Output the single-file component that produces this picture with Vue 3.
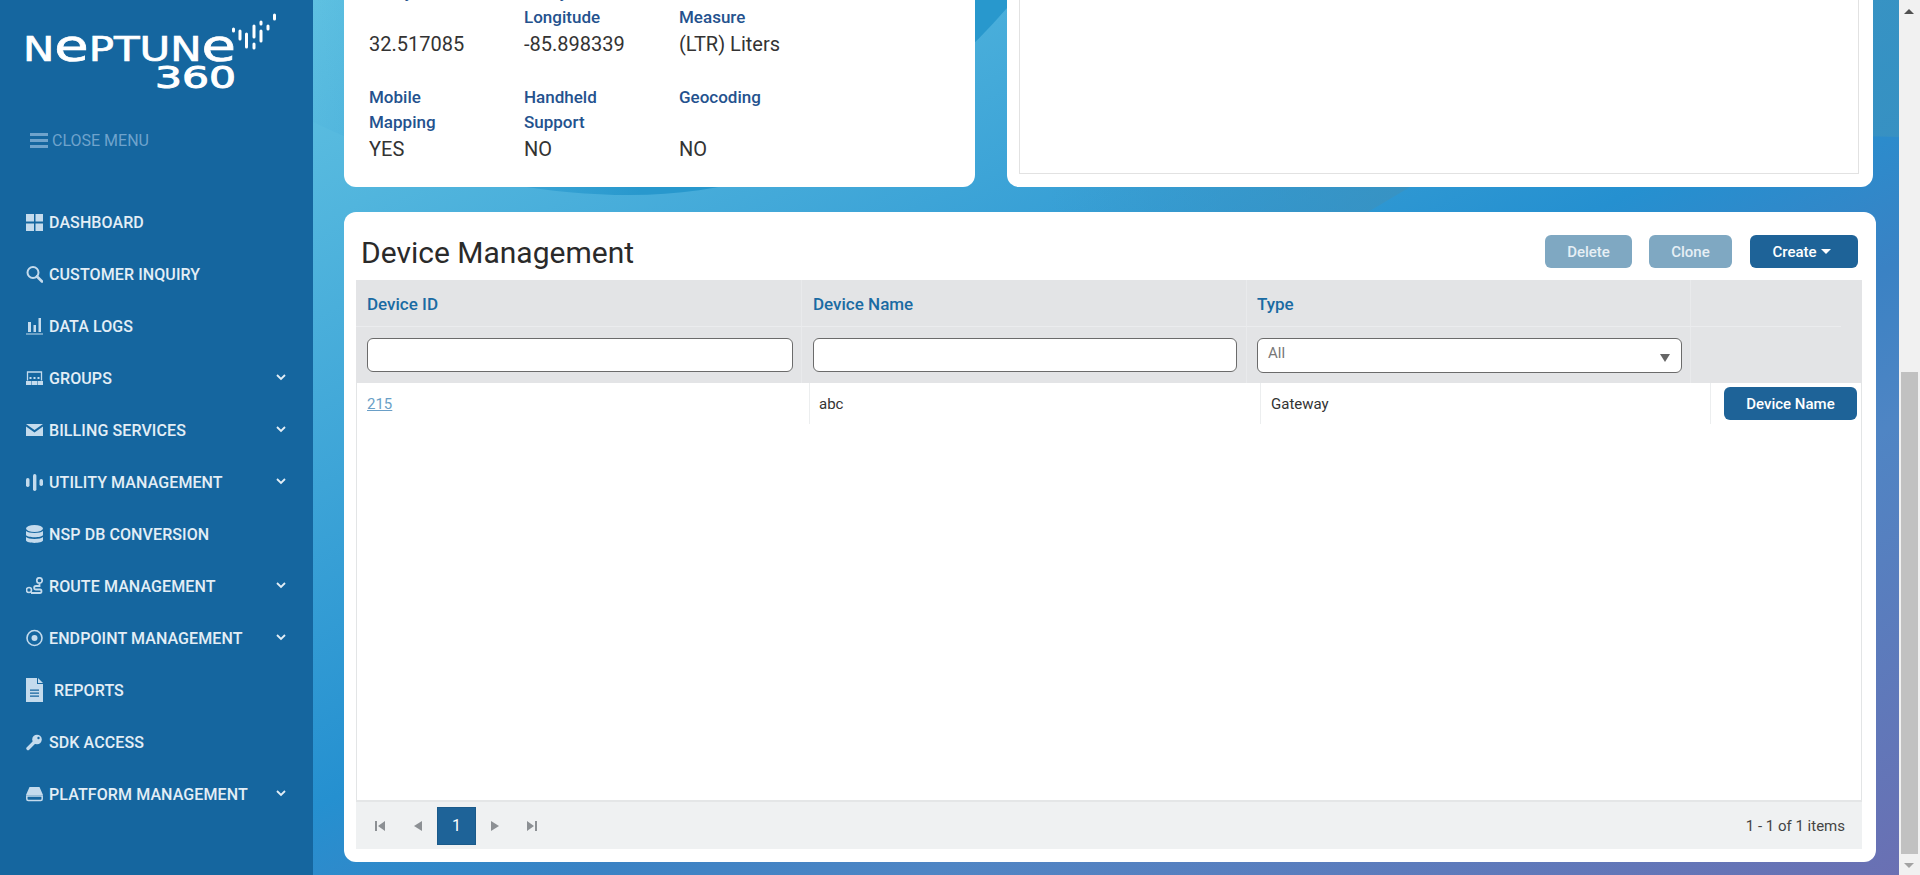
<template>
  <div class="app">
    <aside class="sidebar">
      <div class="logo">
        <svg width="300" height="96" viewBox="0 0 300 96">
          <text x="23" y="61" class="logo-word" textLength="213" lengthAdjust="spacingAndGlyphs">N<tspan class="logo-e">e</tspan>PTUN<tspan class="logo-e">e</tspan></text>
          <text x="155" y="88" class="logo-num" textLength="81" lengthAdjust="spacingAndGlyphs">360</text>
          <g stroke="#fff" stroke-width="3" stroke-linecap="round">
            <path d="M233.500 29v2M240 31v8M246.500 34v13M254 26v11M254 44v4M261 22v2M261 31v10M268 26v3M274.500 15v4" />
          </g>
        </svg>
      </div>
      <div class="close-menu">
        <svg width="18" height="15" viewBox="0 0 18 15"><path d="M0 0h18v3H0zM0 6h18v3H0zM0 12h18v3H0z" fill="#6fa3cc" /></svg>
        <span>CLOSE MENU</span>
      </div>
      <nav class="nav">
        <div v-for="item in navItems" :key="item.label" class="nav-item" :class="{ 'nav-reports': item.label === 'REPORTS' }">
          <svg class="nav-icon" :height="item.label === 'REPORTS' ? 24 : 18" :viewBox="item.label === 'REPORTS' ? '0 0 17 24' : '0 0 17 18'" v-html="item.icon"></svg>
          <span class="nav-label">{{ item.label }}</span>
          <svg v-if="item.sub" class="chevron" width="10" height="7" viewBox="0 0 10 7"><path d="M1 1l4 4 4-4" fill="none" stroke="#e3eef6" stroke-width="1.800" /></svg>
        </div>
      </nav>
    </aside>

    <main class="main">
      <svg class="bg-shapes" viewBox="313 0 1586 875" preserveAspectRatio="none">
        <defs>
          <linearGradient id="bowl" gradientUnits="userSpaceOnUse" x1="313" y1="0" x2="640" y2="0">
            <stop offset="0" stop-color="#3fa8d8" stop-opacity="0.1" />
            <stop offset="1" stop-color="#2898cd" stop-opacity="1" />
          </linearGradient>
          <linearGradient id="swoosh" gradientUnits="userSpaceOnUse" x1="1050" y1="0" x2="1400" y2="0">
            <stop offset="0" stop-color="#3a92c0" stop-opacity="0" />
            <stop offset="1" stop-color="#3a92c0" stop-opacity="0.8" />
          </linearGradient>
        </defs>
        <path d="M313 122C400 165 520 195 630 195C780 195 900 130 1007 8V0H313Z" fill="url(#bowl)" />
        <path d="M1050 212H1368L1410 187C1500 140 1700 130 1899 137V0H1050Z" fill="url(#swoosh)" />
      </svg>

      <div class="content">
        <section class="top-row">
          <div class="card info-card">
            <div v-for="field in fields" :key="field.label" class="field">
              <div class="field-label">{{ field.label }}</div>
              <div class="field-value">{{ field.value }}</div>
            </div>
          </div>
          <div class="card map-card">
            <div class="map-box"></div>
          </div>
        </section>

        <section class="card device-card">
          <div class="device-head">
            <h2>Device Management</h2>
            <div class="actions">
              <span class="btn btn-off">Delete</span>
              <span class="btn btn-off btn-clone">Clone</span>
              <span class="btn btn-create">Create <i class="caret"></i></span>
            </div>
          </div>

          <div class="grid">
            <div class="grid-head">
              <div class="th">Device ID</div>
              <div class="th">Device Name</div>
              <div class="th th-type">Type</div>
              <div class="th th-empty"></div>
              <div class="filter"><input type="text" class="input" /></div>
              <div class="filter filter-name"><input type="text" class="input" /></div>
              <div class="filter filter-type">
                <div class="select">
                  <span>All</span>
                  <i class="select-arrow"></i>
                </div>
              </div>
              <div class="filter"></div>
            </div>

            <div class="grid-body">
              <div class="row">
                <div class="td"><a class="link">215</a></div>
                <div class="td td-name">abc</div>
                <div class="td">Gateway</div>
                <div class="td td-action"><span class="btn btn-row">Device Name</span></div>
              </div>
            </div>

            <div class="pager">
              <div class="pager-nav">
                <svg width="12" height="12" viewBox="0 0 12 12"><path d="M1 1h2v10H1zM11 1v10L4 6z" fill="#8c9094" /></svg>
                <svg class="pg-prev" width="10" height="12" viewBox="0 0 10 12"><path d="M9 1v10L1 6z" fill="#8c9094" /></svg>
                <span class="page-current">1</span>
                <svg class="pg-next" width="10" height="12" viewBox="0 0 10 12"><path d="M1 1v10l8-5z" fill="#8c9094" /></svg>
                <svg class="pg-last" width="12" height="12" viewBox="0 0 12 12"><path d="M1 1v10l7-5zM9 1h2v10H9z" fill="#8c9094" /></svg>
              </div>
              <div class="pager-info">1 - 1 of 1 items</div>
            </div>
          </div>
        </section>
      </div>
    </main>

    <div class="scrollbar">
      <i class="sb-up"></i>
      <div class="sb-thumb"></div>
      <i class="sb-down"></i>
    </div>
  </div>
</template>

<script setup>
const c = '#c4dbed'

const navItems = [
  { label: 'DASHBOARD', icon: `<path fill="${c}" d="M0 1h8v7.500H0zM9.500 1H17v7.500H9.500zM0 10.500h8V18H0zM9.500 10.500H17V18H9.500z"/>` },
  { label: 'CUSTOMER INQUIRY', icon: `<circle cx="7" cy="7.500" r="5.500" fill="none" stroke="${c}" stroke-width="2"/><path d="M11 11.500l5 5" stroke="${c}" stroke-width="2.600" stroke-linecap="round"/>` },
  { label: 'DATA LOGS', icon: `<path fill="${c}" d="M2 5h3v10H2zM7.500 8h2.500v7H7.500zM12.500 1H15v14h-2.500zM0 16.500h17v1H0z"/>` },
  { label: 'GROUPS', sub: true, icon: `<path fill="none" stroke="${c}" stroke-width="1.300" d="M1.500 11.500V3h14v8.500"/><path fill="${c}" d="M3.500 8h2v2h-2zM7.500 8h2v2h-2zM11.500 8h2v2h-2zM0 12h5.500v4H0zM6 12h5v4H6zM11.500 12H17v4h-5.500z"/>` },
  { label: 'BILLING SERVICES', sub: true, icon: `<path fill="${c}" d="M0 3h17L8.500 9zM0 5.500l8.500 6 8.500-6V15H0z"/>` },
  { label: 'UTILITY MANAGEMENT', sub: true, icon: `<rect x="0" y="5" width="3.500" height="9" rx="1.700" fill="${c}"/><rect x="7" y="1" width="3.400" height="17" rx="1.700" fill="${c}"/><rect x="13.500" y="6" width="3.500" height="7" rx="1.700" fill="${c}"/>` },
  { label: 'NSP DB CONVERSION', icon: `<ellipse cx="8.500" cy="3.500" rx="8.500" ry="3.500" fill="${c}"/><path fill="${c}" d="M0 6c2 2.500 15 2.500 17 0v4c-1 3-16 3-17 0zM0 12c2 2.500 15 2.500 17 0v3.500c-1 3.200-16 3.200-17 0z"/>` },
  { label: 'ROUTE MANAGEMENT', sub: true, icon: `<circle cx="3" cy="13" r="2.500" fill="none" stroke="${c}" stroke-width="1.600"/><circle cx="13.500" cy="3.500" r="2.700" fill="none" stroke="${c}" stroke-width="1.700"/><path d="M13.500 7v2H10c-2.500 0-2.500 3.500 0 3.500h4c2 0 2 3.500 0 3.500H5" fill="none" stroke="${c}" stroke-width="1.800"/>` },
  { label: 'ENDPOINT MANAGEMENT', sub: true, icon: `<circle cx="8.500" cy="9" r="7.500" fill="none" stroke="${c}" stroke-width="1.600"/><circle cx="8.500" cy="9" r="3" fill="${c}"/>` },
  { label: 'REPORTS', icon: `<path fill="${c}" d="M0 0h11v6h6v18H0z"/><path fill="${c}" d="M12 0l5 5h-5z"/><path fill="#15669f" d="M4 11.500h9v1.300H4zM4 14.500h9v1.300H4zM4 17.500h9v1.300H4z"/>` },
  { label: 'SDK ACCESS', icon: `<circle cx="11" cy="6.500" r="4.800" fill="${c}"/><path d="M8 9.500l-6 6" stroke="${c}" stroke-width="3.400" stroke-linecap="round"/><circle cx="12.500" cy="5" r="1.200" fill="#15669f"/>` },
  { label: 'PLATFORM MANAGEMENT', sub: true, icon: `<path fill="${c}" d="M3.500 2h10L17 10H0z"/><path fill="none" stroke="${c}" stroke-width="1.500" d="M.800 11v3c0 1 .500 1.500 1.500 1.500h12.400c1 0 1.500-.500 1.500-1.500v-3z"/>` }
]

const fields = [
  { label: 'Utility', value: '32.517085' },
  { label: 'Utility Longitude', value: '-85.898339' },
  { label: 'Unit of Measure', value: '(LTR) Liters' },
  { label: 'Mobile Mapping', value: 'YES' },
  { label: 'Handheld Support', value: 'NO' },
  { label: 'Geocoding', value: 'NO' }
]
</script>

<style>
html, body {
  margin: 0;
  overflow: hidden;
}
</style>

<style scoped>
* {
  box-sizing: border-box;
}
.app {
  display: flex;
  width: 1920px;
  height: 875px;
  overflow: hidden;
  font-family: Roboto, "Liberation Sans", sans-serif;
  color: #333;
}

/* sidebar */
.sidebar {
  width: 313px;
  flex-shrink: 0;
  background: #15669f;
}
.logo {
  height: 115px;
}
.logo svg {
  display: block;
}
.logo-word {
  font-family: "DejaVu Sans", sans-serif;
  font-size: 33px;
  fill: #fff;
  stroke: #fff;
  stroke-width: 0.7px;
}
.logo-e {
  font-size: 44px;
}
.logo-num {
  font-family: "DejaVu Sans", sans-serif;
  font-size: 30px;
  fill: #fff;
  stroke: #fff;
  stroke-width: 1px;
}
.close-menu {
  display: flex;
  align-items: center;
  gap: 4px;
  height: 50px;
  padding-left: 30px;
  font-size: 16px;
  color: #6fa3cc;
}
.nav {
  margin-top: 31px;
}
.nav-item {
  display: flex;
  align-items: center;
  height: 52px;
  padding-left: 26px;
  color: #e3eef6;
  font-size: 16px;
  font-weight: 500;
  letter-spacing: 0.1px;
  position: relative;
}
.nav-icon {
  width: 17px;
  flex-shrink: 0;
  margin-right: 6px;
}
.nav-reports .nav-icon {
  margin-right: 11px;
}
.chevron {
  position: absolute;
  left: 276px;
  top: 22px;
}

/* main */
.main {
  position: relative;
  flex: 1;
  min-width: 0;
  height: 875px;
  overflow: hidden;
  background: linear-gradient(155deg, #62c3e2 0%, #2590d0 50%, #3a82c4 62%, #4f85c4 72%, #6a70b3 100%);
}
.bg-shapes {
  position: absolute;
  left: 0;
  top: 0;
  width: 100%;
  height: 100%;
}
.content {
  position: relative;
  padding-left: 31px;
  margin-top: -30px;
}
.card {
  background: #fff;
  border-radius: 12px;
}
.top-row {
  display: flex;
  gap: 32px;
  margin-bottom: 25px;
}
.info-card {
  width: 631px;
  height: 217px;
  padding: 9px 0 0 25px;
  display: grid;
  grid-template-columns: repeat(3, 155px);
  grid-auto-rows: 105px;
}
.field-label {
  height: 51px;
  width: 100px;
  padding-top: 1px;
  font-size: 17px;
  font-weight: 500;
  line-height: 25px;
  color: #24528e;
}
.field-value {
  font-size: 20px;
  line-height: 27px;
  padding-top: 1px;
  color: #333;
}
.map-card {
  width: 866px;
  height: 217px;
  padding: 0 14px 13px 12px;
}
.map-box {
  height: 100%;
  border: 1px solid #e2e2e2;
}

.device-card {
  width: 1532px;
  height: 650px;
  padding: 0 14px 13px 12px;
  display: flex;
  flex-direction: column;
}
.device-head {
  display: flex;
  justify-content: space-between;
  align-items: flex-start;
  height: 68px;
  padding: 0 4px 0 5px;
}
.device-head h2 {
  margin: 22px 0 0;
  font-size: 30px;
  font-weight: 400;
  line-height: 38px;
  color: #2a2a2a;
}
.actions {
  display: flex;
  margin-top: 23px;
}
.btn {
  display: flex;
  align-items: center;
  justify-content: center;
  height: 33px;
  border-radius: 6px;
  font-size: 15px;
  font-weight: 500;
}
.btn-off {
  width: 87px;
  background: #7fa8c2;
  color: #e6eff5;
}
.btn-clone {
  width: 83px;
  margin-left: 17px;
}
.btn-create {
  width: 108px;
  margin-left: 18px;
  padding-right: 5px;
  background: #1e6398;
  color: #fff;
  gap: 4px;
}
.caret {
  width: 0;
  height: 0;
  border-left: 5px solid transparent;
  border-right: 5px solid transparent;
  border-top: 5px solid #fff;
}

/* grid */
.grid {
  flex: 1;
  display: flex;
  flex-direction: column;
}
.grid-head {
  display: grid;
  grid-template-columns: 446px 445px 444px 171px;
  grid-template-rows: 47px 56px;
  background: #e3e4e6;
}
.th {
  display: flex;
  align-items: center;
  padding-left: 11px;
  padding-top: 1px;
  font-size: 17px;
  font-weight: 500;
  color: #1a6ba3;
  border-right: 1px solid #e9eaec;
  border-bottom: 1px solid #ebecee;
}
.th-type {
  padding-left: 10px;
}
.th-empty {
  border-right: none;
  margin-right: 21px;
}
.filter {
  display: flex;
  align-items: center;
  padding: 0 8px 0 11px;
  border-right: 1px solid #e9eaec;
}
.filter:last-child {
  border-right: none;
}
.filter-name {
  padding-right: 9px;
}
.filter-type {
  padding-left: 10px;
}
.input {
  width: 100%;
  height: 34px;
  border: 1px solid #6b6b6b;
  border-radius: 6px;
  background: #fff;
  outline: none;
}
.select {
  position: relative;
  width: 100%;
  height: 35px;
  padding: 5px 10px;
  border: 1px solid #6b6b6b;
  border-radius: 6px;
  background: #fff;
  font-size: 15px;
  color: #777;
}
.select-arrow {
  position: absolute;
  right: 11px;
  top: 15px;
  width: 0;
  height: 0;
  border-left: 5px solid transparent;
  border-right: 5px solid transparent;
  border-top: 8px solid #666;
}
.grid-body {
  flex: 1;
  border-left: 1px solid #e3e5e6;
  border-right: 1px solid #e3e5e6;
}
.row {
  display: grid;
  grid-template-columns: 453px 451px 450px 150px;
  height: 41px;
  font-size: 15px;
  color: #333;
}
.td {
  display: flex;
  align-items: center;
  padding-left: 10px;
  border-right: 1px solid #eceeef;
}
.td-name {
  padding-left: 9px;
}
.td-action {
  border-right: none;
  padding-left: 13px;
  align-items: flex-start;
  padding-top: 4px;
}
.link {
  color: #6a9fc7;
  text-decoration: underline;
}
.btn-row {
  width: 133px;
  background: #1e6398;
  color: #fff;
}

/* pager */
.pager {
  display: flex;
  justify-content: space-between;
  align-items: center;
  height: 49px;
  padding-right: 17px;
  background: #eff1f2;
  border-top: 2px solid #e4e6e7;
}
.pager-nav {
  display: flex;
  align-items: center;
  padding-left: 18px;
}
.pg-prev {
  margin-left: 27px;
}
.page-current {
  display: flex;
  align-items: center;
  justify-content: center;
  width: 39px;
  height: 38px;
  margin-left: 14px;
  background: #1e6398;
  border: 1px solid #1a5a8a;
  color: #fff;
  font-size: 16px;
}
.pg-next {
  margin-left: 14px;
}
.pg-last {
  margin-left: 26px;
}
.pager-info {
  font-size: 15px;
  color: #444;
}

/* scrollbar */
.scrollbar {
  position: relative;
  width: 21px;
  flex-shrink: 0;
  background: #f1f1f1;
}
.sb-up,
.sb-down {
  position: absolute;
  left: 5px;
  width: 0;
  height: 0;
  border-left: 5px solid transparent;
  border-right: 5px solid transparent;
}
.sb-up {
  top: 9px;
  border-bottom: 5px solid #505050;
}
.sb-down {
  bottom: 7px;
  border-top: 5px solid #a3a3a3;
}
.sb-thumb {
  position: absolute;
  left: 2px;
  top: 372px;
  width: 17px;
  height: 482px;
  background: #c1c1c1;
}
</style>
